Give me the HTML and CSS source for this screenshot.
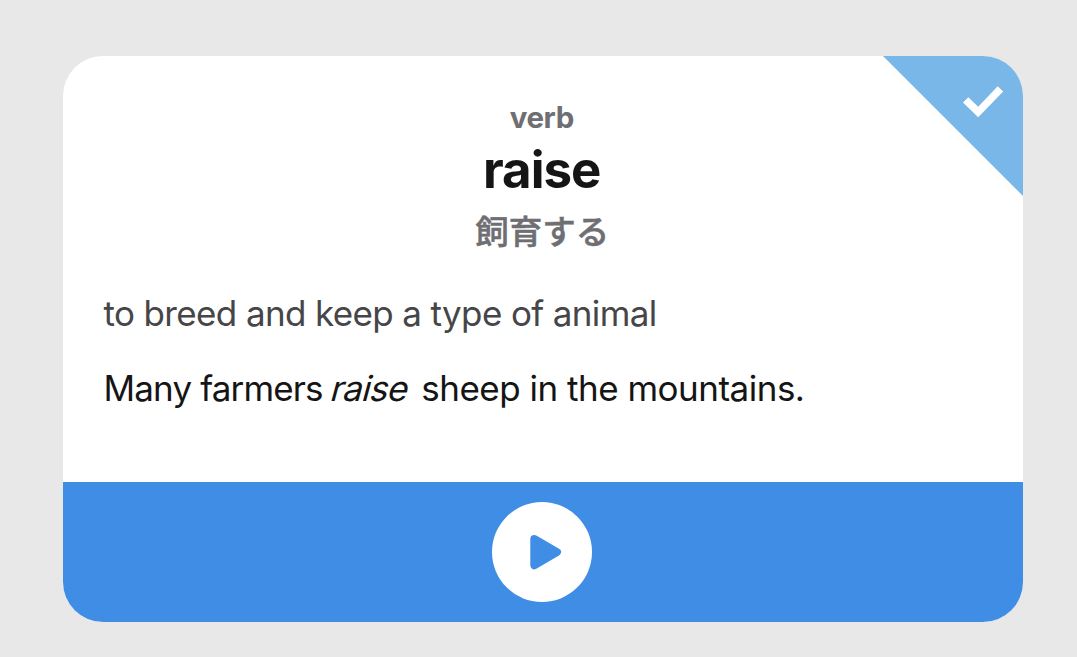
FILE: index.html
```html
<!DOCTYPE html>
<html lang="en">
<head>
<meta charset="utf-8">
<title>raise</title>
<link rel="stylesheet" href="styles.css">
</head>
<body>
<main class="card">
  <svg class="corner" width="140" height="140" viewBox="0 0 140 140" aria-hidden="true">
    <path d="M0 0H140V140Z" fill="#78b7e7"/>
    <path d="M80 46.4L85.3 41.2L95.2 50.8L114.7 30.2L120.2 35.4L95.2 61.3Z" fill="#fff"/>
  </svg>
  <section class="content">
    <header class="heading">
      <p class="part"><span>verb</span></p>
      <h1 class="word"><span>raise</span></h1>
      <p class="translation" lang="ja"><span>飼育する</span></p>
    </header>
    <p class="definition"><span>to breed and keep a type of animal</span></p>
    <p class="example"><span class="lead">Many farmers </span><em class="term">raise</em> sheep in the mountains.</p>
  </section>
  <footer class="player">
    <button class="play" aria-label="Play">
      <svg width="100" height="100" viewBox="0 0 100 100"><path d="M42.3 37L65 50.1L42.3 63.2Z" fill="#408de5" stroke="#408de5" stroke-width="8" stroke-linejoin="round"/></svg>
    </button>
  </footer>
</main>
</body>
</html>
```

FILE: styles.css
```css
* { box-sizing: border-box; }
body { margin: 0; padding: 56px 54px 35px 63px; background: #e8e8e8; font-family: Inter, "Noto Sans CJK JP", sans-serif; }
.card { position: relative; display: flex; flex-direction: column; width: 960px; height: 566px; overflow: hidden; border-radius: 40px; background: #fff; }
.corner { position: absolute; top: 0; right: 0; }
.content { flex: 1; padding: 40px 41px 0 40.5px; }
.heading { text-align: center; padding-right: 2px; }
.part, .word, .translation, .definition, .example { margin: 0; white-space: nowrap; }
.part { font-size: 29.5px; line-height: 42px; font-weight: 700; letter-spacing: -0.4px; color: #6e6e73; }
.word { font-size: 51px; line-height: 64px; font-weight: 700; letter-spacing: -1px; color: #151515; }
.translation { padding-left: 1px; font-family: "Noto Sans CJK JP", sans-serif; font-size: 33.5px; line-height: 56px; font-weight: 500; color: #6e6e73; -webkit-text-stroke: 0.5px #6e6e73; }
.definition { margin-top: 33px; font-size: 35px; line-height: 44px; letter-spacing: -0.63px; color: #464648; }
.example { margin-top: 31px; font-size: 35px; line-height: 44px; letter-spacing: -0.5px; color: #151515; }
.lead { letter-spacing: -0.85px; }
.term { display: inline-block; margin: 0 6px 0 -2.5px; font-style: normal; letter-spacing: -0.7px; transform: skewX(-15deg); transform-origin: 0 34px; }
.player { display: flex; justify-content: center; align-items: center; height: 140px; padding-right: 2px; background: #408de5; }
.play { width: 100px; height: 100px; padding: 0; border: 0; border-radius: 50%; background: #fff; }
.play svg { display: block; }
```
